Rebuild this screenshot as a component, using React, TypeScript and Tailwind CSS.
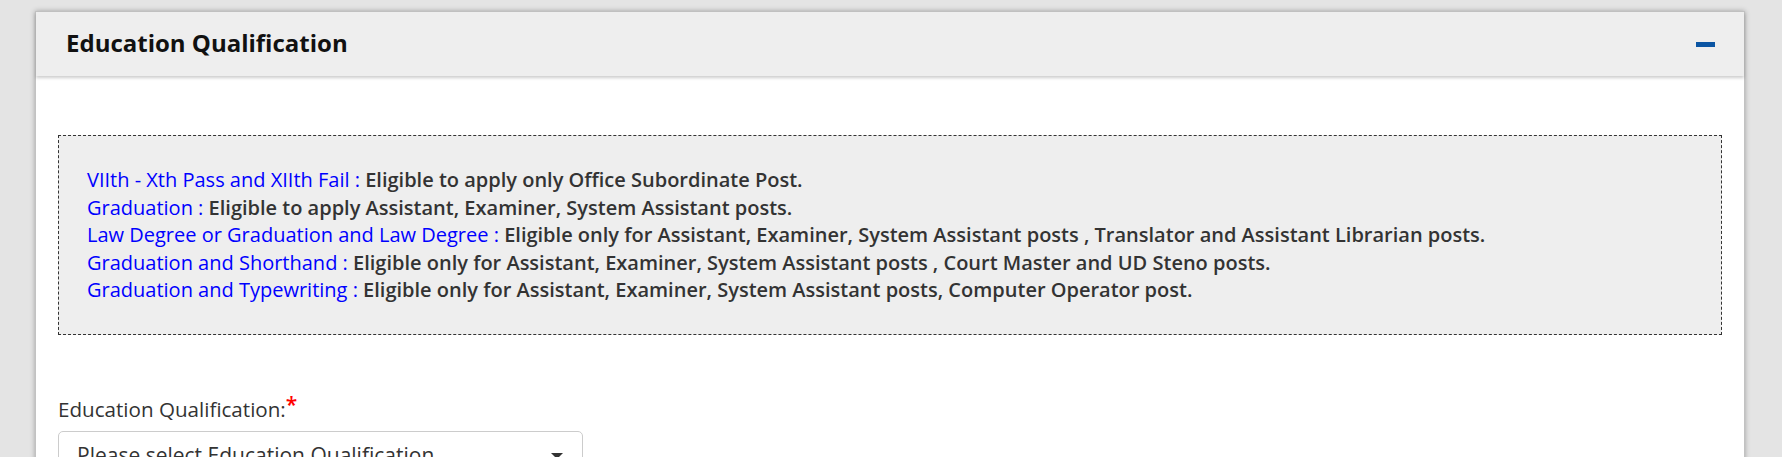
import React from "react";

type Rule = { label: string; text: string };

const rules: Rule[] = [
  {
    label: "VIIth - Xth Pass and XIIth Fail :",
    text: "Eligible to apply only Office Subordinate Post.",
  },
  {
    label: "Graduation :",
    text: "Eligible to apply Assistant, Examiner, System Assistant posts.",
  },
  {
    label: "Law Degree or Graduation and Law Degree :",
    text: "Eligible only for Assistant, Examiner, System Assistant posts , Translator and Assistant Librarian posts.",
  },
  {
    label: "Graduation and Shorthand :",
    text: "Eligible only for Assistant, Examiner, System Assistant posts , Court Master and UD Steno posts.",
  },
  {
    label: "Graduation and Typewriting :",
    text: "Eligible only for Assistant, Examiner, System Assistant posts, Computer Operator post.",
  },
];

export default function App() {
  return (
    <div className="min-h-screen bg-[#e4e4e4] pl-[35px] pr-[37px] pt-[11px] font-['Open_Sans',sans-serif]">
      <div className="border border-[#c2c2c2] bg-white shadow-[0_0_5px_rgba(0,0,0,0.3)]">
        {/* header */}
        <div className="relative flex h-[64px] items-center justify-between bg-[#eeeeee] pl-[30px] pr-[29px] shadow-[0_2px_3px_rgba(0,0,0,0.2)]">
          <h2 className="-mt-[2px] text-[24px] font-bold text-[#111]">
            Education Qualification
          </h2>
          <button className="flex h-[20px] w-[20px] items-center justify-center">
            <span className="block h-[5px] w-[19px] bg-[#0b55a3]" />
          </button>
        </div>

        {/* body */}
        <div className="px-[22px] pt-[59px]">
          <div className="border border-dashed border-[#333] bg-[#eeeeee] pb-[30px] pl-[28px] pr-4 pt-[30px]">
            {rules.map((r) => (
              <div key={r.label} className="text-[20px] leading-[27.5px]">
                <span className="text-[#0000ff]">{r.label}</span>{" "}
                <span className="font-semibold text-[#333]">{r.text}</span>
              </div>
            ))}
          </div>

          <div className="pt-[60px]">
            <label className="block text-[20.6px] leading-[28px] text-[#333]">
              Education Qualification:
              <span className="relative -top-[5px] text-[21px] font-semibold leading-none text-[#ff0000]">
                *
              </span>
            </label>
            <div className="mt-[8px] flex h-[50px] w-[525px] items-center justify-between rounded-[5px] border border-[#cccccc] bg-white pl-[18px] pr-[19px]">
              <span className="text-[21px] text-[#333]">
                Please select Education Qualification
              </span>
              <span className="h-0 w-0 border-l-[6px] border-r-[6px] border-t-[6px] border-l-transparent border-r-transparent border-t-[#333]" />
            </div>
          </div>
        </div>
        <div className="h-[40px]" />
      </div>
    </div>
  );
}
